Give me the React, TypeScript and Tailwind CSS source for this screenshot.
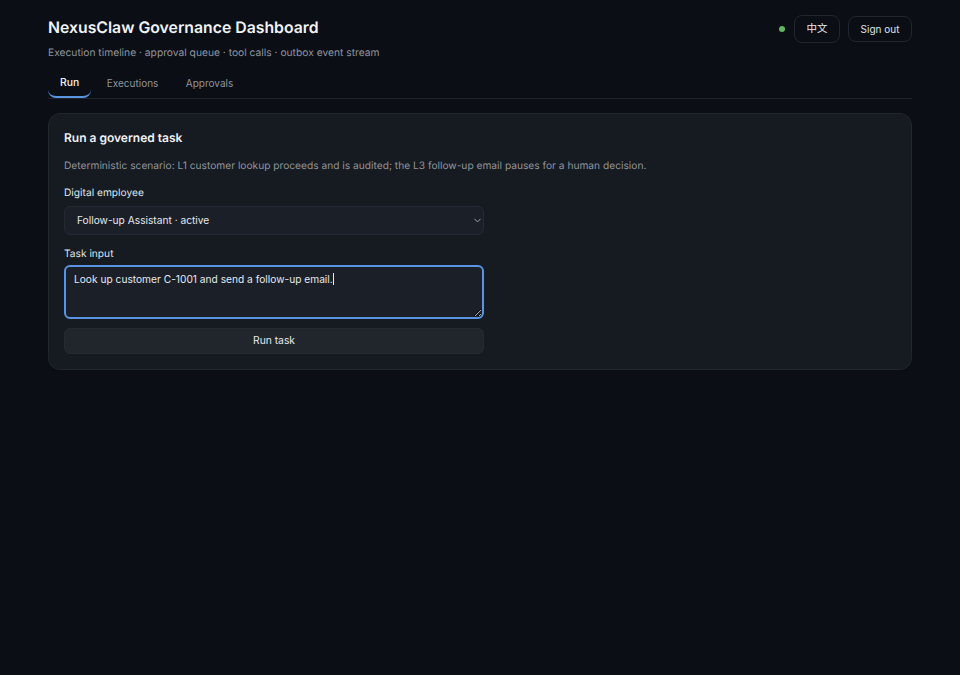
import React, { useState } from "react";
import { ChevronDown } from "lucide-react";

const tabs = ["Run", "Executions", "Approvals"];

const App: React.FC = () => {
  const [activeTab, setActiveTab] = useState<string>("Run");
  const [task, setTask] = useState<string>("Look up customer C-1001 and send a follow-up email.");

  return (
    <div className="min-h-[675px] bg-[#0b0e15] px-12 pt-[15px] font-['Inter','Liberation_Sans','Noto_Sans_CJK_SC',sans-serif] text-[#e6e9ee] antialiased [text-rendering:geometricPrecision]">
      {/* Header */}
      <header className="flex items-start justify-between">
        <div className="pt-[1px]">
          <h1 className="text-[15.8px] leading-[24px] font-semibold text-[#f0f3f6]">NexusClaw Governance Dashboard</h1>
          <p className="mt-[4.5px] text-[10.25px] leading-[17px] text-[#8f949c]">
            Execution timeline · approval queue · tool calls · outbox event stream
          </p>
        </div>
        <div className="flex items-center">
          <span className="mr-[9px] h-[6px] w-[6px] rounded-full bg-[#5cb85c]" />
          <button className="h-[28px] w-[46px] rounded-lg border border-[#21252d] text-[10.5px] text-[#e6e9ee]">中文</button>
          <button className="ml-2 h-[26px] w-[64px] rounded-lg border border-[#21252d] text-[10px] text-[#dfe3e8]">Sign out</button>
        </div>
      </header>

      {/* Tabs */}
      <nav className="mt-[6.5px] flex gap-[3.5px] border-b border-[#1f232b]">
        {tabs.map((tab) => (
          <button
            key={tab}
            onClick={() => setActiveTab(tab)}
            className={`h-[30px] rounded-b-lg border-b-2 px-3 pt-[2px] ${
              activeTab === tab
                ? "border-[#5a94e0] text-[10.4px] font-medium text-[#f0f3f6]"
                : "border-transparent text-[10px] text-[#8f949c]"
            }`}
          >
            {tab}
          </button>
        ))}
      </nav>

      {/* Run panel */}
      <section className="mt-[14px] rounded-xl border border-[#21252d] bg-[#161a21] px-[15px] pt-[15px] pb-[15px]">
        <h2 className="text-[12px] leading-[18px] font-semibold text-[#f0f3f6]">Run a governed task</h2>
        <p className="mt-[11px] text-[10.2px] leading-[17px] text-[#8f949c]">
          Deterministic scenario: L1 customer lookup proceeds and is audited; the L3 follow-up email pauses for a human decision.
        </p>

        <label className="mt-[10px] block text-[10.2px] leading-[16px] text-[#dfe3e8]">Digital employee</label>
        <div className="relative mt-[5px] w-[420px]">
          <select className="block h-[29px] w-full appearance-none rounded-md border border-[#252a32] bg-[#1a1f28] pl-3 text-[10.2px] text-[#e6e9ee] outline-none">
            <option>Follow-up Assistant · active</option>
          </select>
          <ChevronDown size={11} className="pointer-events-none absolute top-[9px] right-[1px] text-[#a8aeb7]" />
        </div>

        <label className="mt-[11px] block text-[10.2px] leading-[16px] text-[#dfe3e8]">Task input</label>
        <div className="relative mt-[3px] w-[420px]">
          <textarea
            autoFocus
            value={task}
            onChange={(e) => setTask(e.target.value)}
            className="block h-[54px] w-full rounded-md border-2 border-[#5a94e0] bg-[#1a1f28] px-2 py-1 text-[10.2px] leading-[16px] text-[#e6e9ee] outline-none"
          />
          {/* text caret, headless browsers don't paint it */}
          <span className="absolute top-[8px] left-[269px] h-[12px] w-px bg-[#e6e9ee]" />
        </div>

        <button className="mt-[9px] block h-[26px] w-[420px] rounded-md border border-[#252a32] bg-[#21252c] text-[10.3px] text-[#e6e9ee]">
          Run task
        </button>
      </section>
    </div>
  );
};

export default App;
